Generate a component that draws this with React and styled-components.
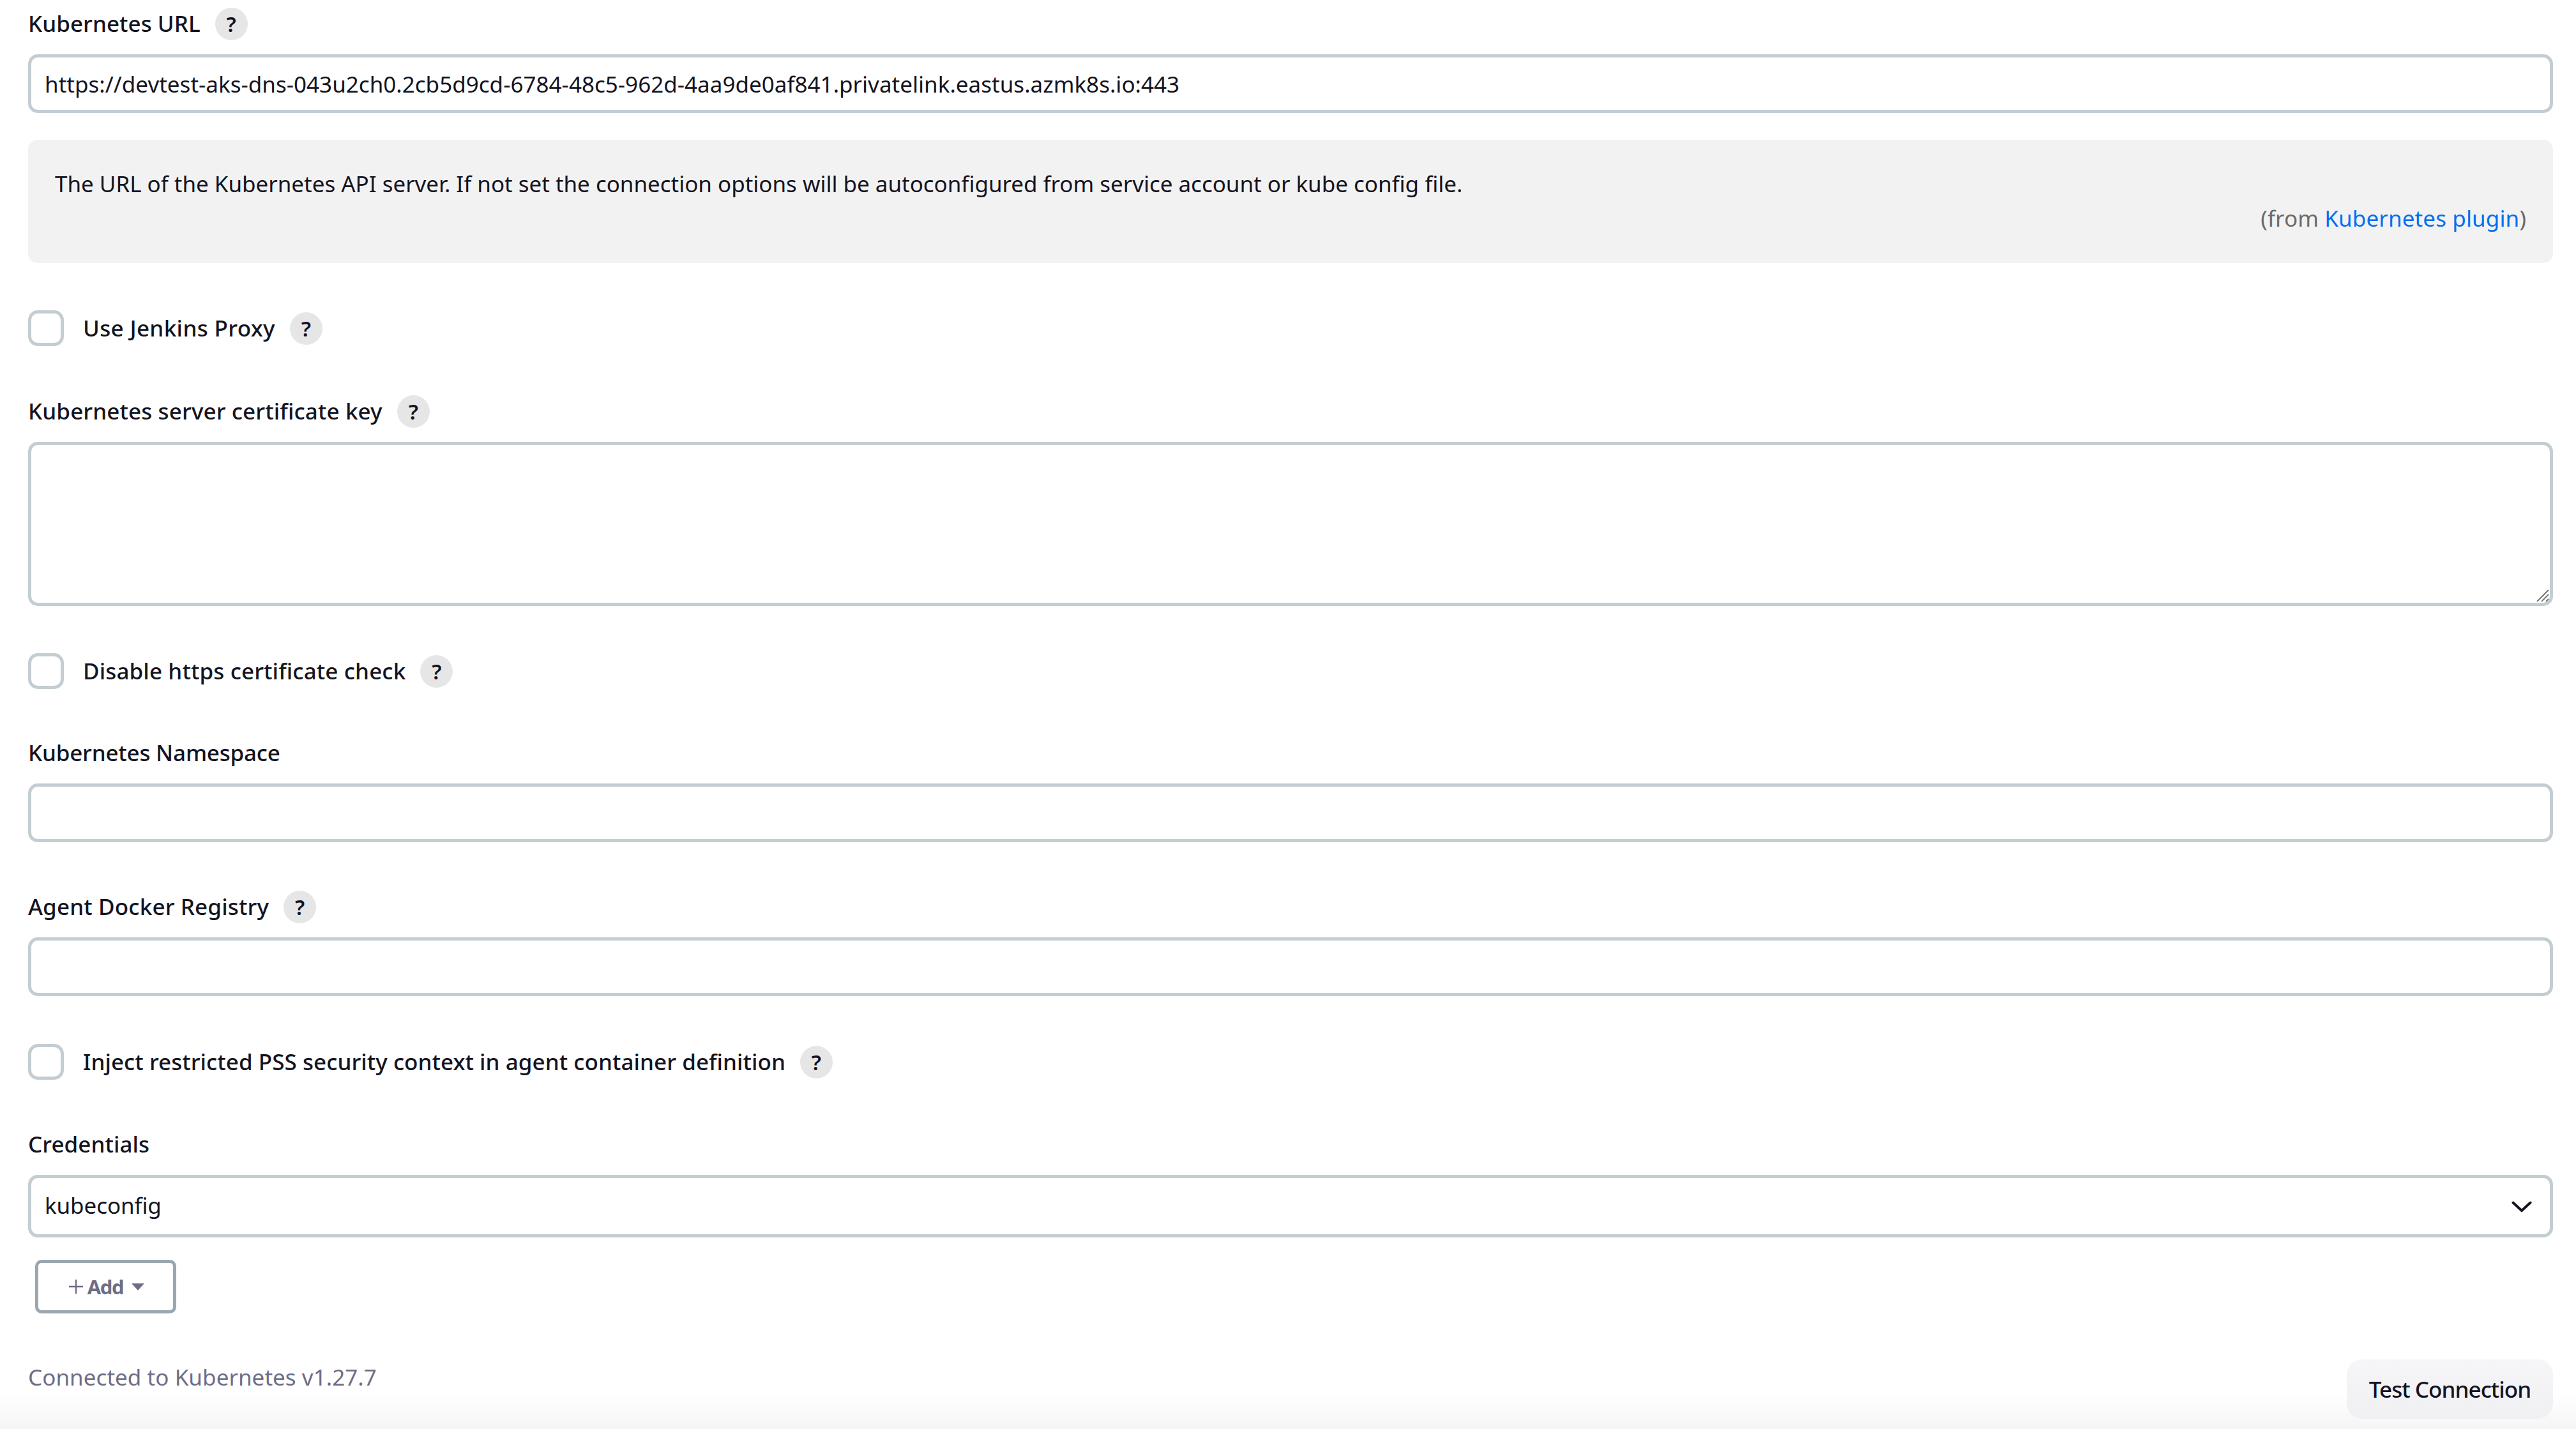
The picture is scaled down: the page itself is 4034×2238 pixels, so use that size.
import React from 'react';
import styled, { createGlobalStyle } from 'styled-components';

const GlobalStyle = createGlobalStyle`
  html, body {
    margin: 0;
    padding: 0;
    height: 100%;
    background: #fff;
    overflow: hidden;
  }
  body {
    font-family: 'Noto Sans', 'Liberation Sans', sans-serif;
    color: #14141f;
  }
`;

const Page = styled.div`
  position: relative;
  height: 2238px;
  box-sizing: border-box;
  padding: 0 36px 0 44px;
  display: flex;
  flex-direction: column;
  overflow: hidden;
`;

const LabelRow = styled.div`
  display: flex;
  align-items: center;
  height: 52px;
  margin-top: ${props => props.$top || 0}px;
  margin-bottom: ${props => props.$bottom ?? 22}px;
`;

const LabelText = styled.span`
  font-size: 35px;
  font-weight: 500;
  letter-spacing: ${props => props.$spacing ?? 0.05}px;
  line-height: 52px;
  white-space: nowrap;
`;

const Help = styled.span`
  width: 51px;
  height: 51px;
  margin-left: 23px;
  border-radius: 50%;
  background: #e6e6e7;
  color: #14141f;
  font-size: 33px;
  font-weight: 600;
  display: flex;
  align-items: center;
  justify-content: center;
  flex: none;
`;

const TextInput = styled.input`
  display: block;
  width: 100%;
  height: 92px;
  box-sizing: border-box;
  border: 5px solid #c3cdd2;
  border-radius: 15px;
  padding: 0 21px;
  font-family: inherit;
  font-size: 35px;
  letter-spacing: 0.02px;
  color: #14141f;
  background: #fff;
  outline: none;
`;

const HelpBox = styled.div`
  height: 193px;
  margin-top: 42px;
  box-sizing: border-box;
  padding: 43px 42px 0;
  background: #f2f2f3;
  border-radius: 15px;
  font-size: 35px;
  letter-spacing: -0.02px;
  line-height: 52px;
`;

const FromLine = styled.div`
  margin-top: 2px;
  text-align: right;
  color: #6c6a6a;
  letter-spacing: 0.12px;
`;

const PluginLink = styled.a`
  color: #0070f0;
  text-decoration: none;
`;

const CheckRow = styled.div`
  display: flex;
  align-items: center;
  height: 56px;
  margin-top: ${props => props.$top}px;
`;

const CheckBox = styled.span`
  width: 56px;
  height: 56px;
  box-sizing: border-box;
  border: 5px solid #c3cdd2;
  border-radius: 15px;
  background: #fff;
  flex: none;
  margin-right: 30px;
`;

const AreaWrap = styled.div`
  position: relative;
  height: 257px;
`;

const TextArea = styled.textarea`
  display: block;
  width: 100%;
  height: 100%;
  box-sizing: border-box;
  border: 5px solid #c3cdd2;
  border-radius: 15px;
  background: #fff;
  resize: none;
  outline: none;
`;

const Grip = styled.svg`
  position: absolute;
  right: 5px;
  bottom: 5px;
  width: 22px;
  height: 22px;
`;

const SelectWrap = styled.div`
  position: relative;
  height: 98px;
`;

const Select = styled.select`
  display: block;
  width: 100%;
  height: 100%;
  box-sizing: border-box;
  appearance: none;
  border: 5px solid #c3cdd2;
  border-radius: 15px;
  padding: 0 21px 3px;
  font-family: inherit;
  font-size: 35px;
  letter-spacing: -0.1px;
  color: #14141f;
  background: #fff;
  outline: none;
`;

const Chevron = styled.svg`
  position: absolute;
  top: 41px;
  right: 33px;
  width: 32px;
  height: 18px;
`;

const AddButton = styled.button`
  display: flex;
  align-items: center;
  justify-content: center;
  width: 221px;
  height: 84px;
  margin: 35px 0 0 11px;
  padding: 0 0 0 2px;
  box-sizing: border-box;
  border: 5px solid #9aa7ae;
  border-radius: 10px;
  background: #fff;
  color: #6e6d85;
  font-family: inherit;
  font-size: 31px;
  font-weight: 700;
  letter-spacing: -1.4px;
`;

const PlusIcon = styled.svg`
  width: 24px;
  height: 24px;
  margin-right: 6px;
`;

const Caret = styled.span`
  width: 0;
  height: 0;
  margin-left: 13px;
  border-left: 10px solid transparent;
  border-right: 10px solid transparent;
  border-top: 11px solid #6e6d85;
`;

const Footer = styled.div`
  display: flex;
  justify-content: space-between;
  align-items: flex-start;
  margin-top: 72px;
  position: relative;
  z-index: 1;
`;

const Status = styled.span`
  margin-top: 2px;
  font-size: 35px;
  letter-spacing: 0.05px;
  line-height: 52px;
  color: #6e6d85;
`;

const TestButton = styled.button`
  width: 323px;
  height: 93px;
  padding: 0;
  border: none;
  border-radius: 24px;
  background: linear-gradient(to bottom, #f6f6f8, #f0f0f3);
  color: #14141f;
  font-family: inherit;
  font-size: 35px;
  font-weight: 500;
  letter-spacing: -0.95px;
`;

const BottomFade = styled.div`
  position: absolute;
  left: 0;
  right: 0;
  bottom: 0;
  height: 56px;
  background: linear-gradient(to bottom, rgba(245, 245, 246, 0), #f5f5f6);
`;

const HelpMark = () => <Help>?</Help>;

const App = () => (
  <Page>
    <GlobalStyle />
    <LabelRow $top={11} $bottom={22}>
      <LabelText>Kubernetes URL</LabelText>
      <HelpMark />
    </LabelRow>
    <TextInput
      readOnly
      value="https://devtest-aks-dns-043u2ch0.2cb5d9cd-6784-48c5-962d-4aa9de0af841.privatelink.eastus.azmk8s.io:443"
    />
    <HelpBox>
      <div>The URL of the Kubernetes API server. If not set the connection options will be autoconfigured from service account or kube config file.</div>
      <FromLine>
        (from <PluginLink href="#">Kubernetes plugin</PluginLink>)
      </FromLine>
    </HelpBox>

    <CheckRow $top={74}>
      <CheckBox />
      <LabelText $spacing={0.35}>Use Jenkins Proxy</LabelText>
      <HelpMark />
    </CheckRow>

    <LabelRow $top={76}>
      <LabelText $spacing={0.12}>Kubernetes server certificate key</LabelText>
      <HelpMark />
    </LabelRow>
    <AreaWrap>
      <TextArea readOnly />
      <Grip viewBox="0 0 22 22">
        <path d="M2 20 L20 2 M9 20 L20 9 M16 20 L20 16" stroke="#777" strokeWidth="2" fill="none" />
      </Grip>
    </AreaWrap>

    <CheckRow $top={74}>
      <CheckBox />
      <LabelText $spacing={0.12}>Disable https certificate check</LabelText>
      <HelpMark />
    </CheckRow>

    <LabelRow $top={74}>
      <LabelText $spacing={-0.2}>Kubernetes Namespace</LabelText>
    </LabelRow>
    <TextInput readOnly />

    <LabelRow $top={75}>
      <LabelText $spacing={0.15}>Agent Docker Registry</LabelText>
      <HelpMark />
    </LabelRow>
    <TextInput readOnly />

    <CheckRow $top={75}>
      <CheckBox />
      <LabelText>Inject restricted PSS security context in agent container definition</LabelText>
      <HelpMark />
    </CheckRow>

    <LabelRow $top={75}>
      <LabelText>Credentials</LabelText>
    </LabelRow>
    <SelectWrap>
      <Select defaultValue="kubeconfig">
        <option value="kubeconfig">kubeconfig</option>
      </Select>
      <Chevron viewBox="0 0 32 18">
        <path d="M2.5 2.5 L16 15 L29.5 2.5" stroke="#14141f" strokeWidth="4" strokeLinecap="round" strokeLinejoin="round" fill="none" />
      </Chevron>
    </SelectWrap>

    <AddButton>
      <PlusIcon viewBox="0 0 24 24">
        <path d="M12 1 V23 M1 12 H23" stroke="#6e6d85" strokeWidth="2.4" fill="none" />
      </PlusIcon>
      Add
      <Caret />
    </AddButton>

    <BottomFade />
    <Footer>
      <Status>Connected to Kubernetes v1.27.7</Status>
      <TestButton>Test Connection</TestButton>
    </Footer>
  </Page>
);

export default App;
